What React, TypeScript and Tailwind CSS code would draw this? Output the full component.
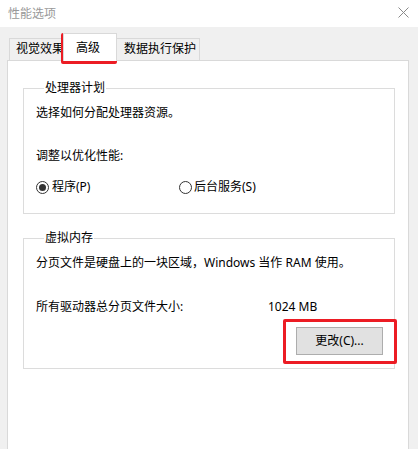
export default function App() {
  return (
    <div
      className="relative w-[418px] h-[449px] overflow-hidden bg-[#f0f0f0] text-[12px] leading-[16px] text-black"
      style={{ fontFamily: "'Noto Sans', 'Noto Sans CJK SC', sans-serif" }}
    >
      {/* Title bar */}
      <div className="h-[27px] bg-white flex items-center justify-between pl-[8px] pr-[9px]">
        <span className="text-[#999999]">性能选项</span>
        <svg width="11" height="11" viewBox="0 0 11 11" className="mb-[2px]">
          <path d="M0.5 0.5 L10.5 10.5 M10.5 0.5 L0.5 10.5" stroke="#8a8a8a" strokeWidth="1" />
        </svg>
      </div>

      {/* Tabs */}
      <div className="h-[33px] flex items-end pl-[9px]">
        <div className="w-[54px] h-[22px] border-t border-l border-[#d9d9d9] bg-[#f0f0f0] pl-[6px] pt-[2px] whitespace-nowrap overflow-hidden">
          视觉效果
        </div>
        <div className="relative z-10 translate-y-px w-[54px] h-[28px] border-t border-l border-r border-[#d9d9d9] bg-white pl-[12px] pt-[6px]">
          高级
        </div>
        <div className="w-[83px] h-[22px] border-t border-r border-[#d9d9d9] bg-[#f0f0f0] pl-[7px] pt-[2px] whitespace-nowrap">
          数据执行保护
        </div>
      </div>

      {/* Panel */}
      <div className="ml-[7px] mr-[9px] h-[400px] bg-white border border-[#d9d9d9] pt-[19px] pl-[15px] pr-[13px]">
        <fieldset className="border border-[#dcdcdc] pl-[12px] pb-[18px]">
          <legend className="ml-[8px] px-px leading-[16px]">处理器计划</legend>
          <div className="pt-[9px]">选择如何分配处理器资源。</div>
          <div className="mt-[27px]">调整以优化性能:</div>
          <div className="mt-[15px] flex items-center h-[16px]">
            <div className="flex items-center w-[143px]">
              <span className="w-[13px] h-[13px] rounded-full border border-[#333333] flex items-center justify-center">
                <span className="w-[7px] h-[7px] rounded-full bg-[#333333]" />
              </span>
              <span className="ml-[3px]">程序(P)</span>
            </div>
            <div className="flex items-center">
              <span className="w-[13px] h-[13px] rounded-full border border-[#333333]" />
              <span className="ml-[2px]">后台服务(S)</span>
            </div>
          </div>
        </fieldset>

        <fieldset className="mt-[16px] border border-[#dcdcdc] pl-[12px] pr-[11px] pb-[13px]">
          <legend className="ml-[8px] px-px leading-[16px]">虚拟内存</legend>
          <div className="pt-[9px]">分页文件是硬盘上的一块区域，Windows 当作 RAM 使用。</div>
          <div className="mt-[28px] flex">
            <span className="w-[232px]">所有驱动器总分页文件大小:</span>
            <span>1024 MB</span>
          </div>
          <div className="mt-[12px] flex justify-end">
            <button className="w-[87px] h-[28px] bg-[#e1e1e1] border border-[#adadad] text-center">
              更改(C)...
            </button>
          </div>
        </fieldset>
      </div>

      {/* Red highlight annotations */}
      <div className="absolute left-[61px] top-[33px] w-[56px] h-[31px] border-[3px] border-[#ec1c24] rounded-[2px]" />
      <div className="absolute left-[283px] top-[319px] w-[114px] h-[45px] border-[3px] border-[#ec1c24] rounded-[2px]" />
    </div>
  )
}
